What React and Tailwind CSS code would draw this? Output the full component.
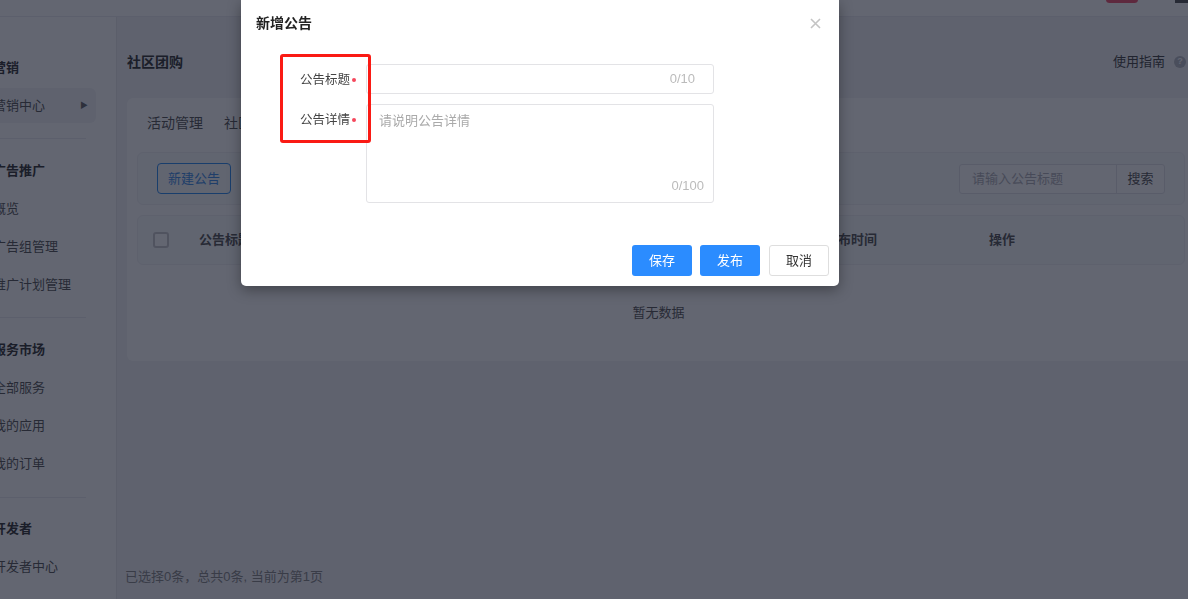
import React from 'react';

function SideGroup({ title, items }) {
  return (
    <div>
      <div className="h-[38px] flex items-center font-bold text-[#333]">{title}</div>
      {items.map((it) => (
        <div key={it} className="h-[38px] flex items-center text-[#555]">{it}</div>
      ))}
    </div>
  );
}

function Sidebar() {
  return (
    <aside className="w-[117px] shrink-0 bg-white border-r border-[#e8e8ec] text-[13px] pt-[32px]">
      <div className="-ml-[7px] pr-[20px]">
        <div className="h-[38px] flex items-center font-bold text-[#333]">营销</div>
        <div className="mt-[1px] h-[35px] flex items-center justify-between rounded-[6px] bg-[#f3f4f7] text-[#555] pr-[8px]">
          <span>营销中心</span>
          <span className="text-[8px] text-[#666]">▶</span>
        </div>
        <div className="mt-[15px] h-px bg-[#ececf0] mr-[10px]" />
        <div className="mt-[13px]">
          <SideGroup title="广告推广" items={['概览', '广告组管理', '推广计划管理']} />
        </div>
        <div className="mt-[13px] h-px bg-[#ececf0] mr-[10px]" />
        <div className="mt-[13px]">
          <SideGroup title="服务市场" items={['全部服务', '我的应用', '我的订单']} />
        </div>
        <div className="mt-[14px] h-px bg-[#ececf0] mr-[10px]" />
        <div className="mt-[12px]">
          <SideGroup title="开发者" items={['开发者中心']} />
        </div>
      </div>
    </aside>
  );
}

function Main() {
  return (
    <main className="flex-1 flex flex-col pl-[10px] text-[13px] text-[#333]">
      <div className="h-[45px] flex items-center justify-between pt-[45px]">
        <span className="text-[14px] font-bold">社区团购</span>
        <div className="flex items-center gap-[9px] pr-[2px]">
          <span className="text-[#444]">使用指南</span>
          <span className="w-[12px] h-[12px] rounded-full bg-[#b8bac2] text-white text-[9px] font-bold flex items-center justify-center">?</span>
        </div>
      </div>
      <section className="mt-[36px] h-[263px] bg-white rounded-l-[6px] pl-[10px] flex flex-col">
        <div className="h-[50px] flex items-center gap-[21px] pl-[10px] text-[14px] text-[#555]">
          <span>活动管理</span>
          <span>社区团购公告</span>
        </div>
        <div className="mt-[4px] h-[53px] mr-[3px] rounded-[6px] bg-[#fafbfc] border border-[#f0f1f4] flex items-center justify-between pl-[19px] pr-[19px]">
          <button className="h-[31px] w-[74px] rounded-[4px] border border-[#2d8cf0] text-[#3d8ee8] text-[13px]">新建公告</button>
          <div className="flex h-[30px] border border-[#e2e3e8] rounded-[3px] bg-white">
            <div className="w-[156px] flex items-center pl-[12px] text-[#b0b0b8]">请输入公告标题</div>
            <div className="w-[48px] border-l border-[#e2e3e8] flex items-center justify-center text-[#555]">搜索</div>
          </div>
        </div>
        <div className="mt-[10px] h-[50px] mr-[3px] rounded-[6px] bg-[#fafbfc] border border-[#f0f1f4] flex items-center font-bold text-[#555]">
          <span className="ml-[15px] w-[16px] h-[16px] rounded-[3px] border-2 border-[#c8c8cc] bg-white" />
          <span className="ml-[30px] w-[626px]">公告标题</span>
          <span className="w-[164px]">发布时间</span>
          <span>操作</span>
        </div>
        <div className="flex-1 flex items-center justify-center text-[#555]">
          <span className="-ml-[8px]">暂无数据</span>
        </div>
      </section>
      <div className="flex-1" />
      <div className="h-[44px] -ml-[2px] text-[#888] pb-[13px] flex items-end">已选择0条，总共0条, 当前为第1页</div>
    </main>
  );
}

function Dialog() {
  return (
    <div className="absolute left-[241px] top-0 w-[598px] h-[286px] bg-white rounded-b-[5px] shadow-[0_4px_14px_rgba(0,0,0,0.35)] text-[13px]">
      <div className="h-[46px] flex items-center justify-between pl-[15px] pr-[18px]">
        <span className="text-[14px] font-bold text-[#222]">新增公告</span>
        <svg width="11" height="11" viewBox="0 0 11 11" className="text-[#c4c4c4]">
          <path d="M1 1L10 10M10 1L1 10" stroke="currentColor" strokeWidth="1.6" />
        </svg>
      </div>
      <div className="pt-[18px] flex flex-col gap-[10px]">
        <div className="flex">
          <label className="w-[125px] pr-[10px] pt-[2px] flex items-center justify-end text-[12.5px] text-[#444]">
            公告标题<span className="ml-[2px] w-[4px] h-[4px] rounded-full bg-[#f5475c]" />
          </label>
          <div className="w-[348px] h-[30px] border border-[#e3e3e6] rounded-[3px] flex items-center justify-end pr-[18px] text-[#bbb]">0/10</div>
        </div>
        <div className="flex">
          <label className="w-[125px] pr-[10px] pt-[2px] h-[30px] flex items-center justify-end text-[12.5px] text-[#444]">
            公告详情<span className="ml-[2px] w-[4px] h-[4px] rounded-full bg-[#f5475c]" />
          </label>
          <div className="w-[348px] h-[99px] border border-[#e3e3e6] rounded-[3px] flex flex-col justify-between pl-[12px] pr-[9px] pt-[6px] pb-[7px]">
            <span className="text-[#aaa]">请说明公告详情</span>
            <span className="self-end text-[#bbb]">0/100</span>
          </div>
        </div>
      </div>
      <div className="mt-[42px] flex justify-end gap-[8px] pr-[10px]">
        <button className="w-[60px] h-[31px] rounded-[3px] bg-[#2b8cff] text-white">保存</button>
        <button className="w-[60px] h-[31px] rounded-[3px] bg-[#2b8cff] text-white">发布</button>
        <button className="ml-[1px] w-[60px] h-[31px] rounded-[3px] border border-[#dedede] bg-white text-[#333]">取消</button>
      </div>
      {/* red annotation frame */}
      <div className="absolute left-[39px] top-[54px] w-[91px] h-[89px] border-[3px] border-[#fa1a14] rounded-[3px]" />
    </div>
  );
}

export default function App() {
  return (
    <div className="relative w-[1188px] h-[599px] overflow-hidden bg-[#f2f3f6] font-['Liberation_Sans','Noto_Sans_CJK_SC',sans-serif]">
      <div className="h-[17px] bg-white border-b border-[#ececf0] relative">
        <div className="absolute right-[50px] -top-[4px] w-[32px] h-[7px] rounded-full bg-[#f0506e]" />
        <div className="absolute right-0 -top-[2px] w-[13px] h-[5px] bg-[#555]" />
      </div>
      <div className="flex h-[582px]">
        <Sidebar />
        <Main />
      </div>
      <div className="fixed inset-0 bg-[#101425a6]" />
      <Dialog />
    </div>
  );
}
